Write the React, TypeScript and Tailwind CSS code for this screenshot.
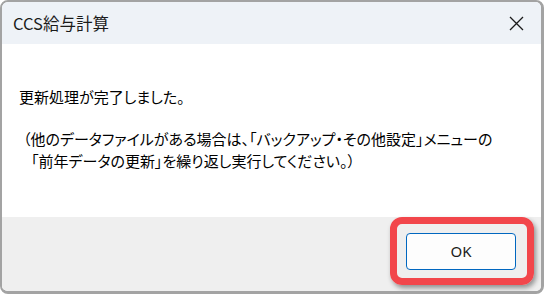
import React from "react";

const jp = "font-['Noto_Sans_CJK_JP','Noto_Sans',sans-serif] [font-feature-settings:'palt']";

export default function App() {
  return (
    <div className="w-[544px] h-[294px] bg-white">
      <div className="w-[544px] h-[294px] flex flex-col overflow-hidden rounded-[8px] border-l-2 border-t-2 border-r-[3px] border-b-[3px] border-[#a3a3a3] bg-white">
        <div className="h-[42px] shrink-0 bg-[#eef2f7] flex items-center justify-between pl-[11px] pr-[17px]">
          <span className={`${jp} text-[16.5px] text-[#1b1b1b]`}>CCS給与計算</span>
          <svg width="15" height="15" viewBox="0 0 15 15" className="text-[#1b1b1b]">
            <path d="M1 1L14 14M14 1L1 14" stroke="currentColor" strokeWidth="1.3" fill="none" />
          </svg>
        </div>
        <div className={`${jp} h-[173px] shrink-0 bg-white pl-[17px] pt-[42px] text-[15px] leading-[22px] text-black`}>
          <div className="whitespace-nowrap">更新処理が完了しました。</div>
          <div className="mt-[20px] whitespace-nowrap">
            <div className="pl-[4px]">（他のデータファイルがある場合は、「バックアップ・その他設定」メニューの</div>
            <div className="pl-[12px]">「前年データの更新」を繰り返し実行してください。）</div>
          </div>
        </div>
        <div className="flex-1 bg-[#efefef] flex justify-end items-start pt-[16px] pr-[25px]">
          <div className="relative">
            <div className="absolute -left-[16px] -top-[16px] w-[144px] h-[68px] rounded-[12px] border-[7px] border-[#f2464b] shadow-[2px_3px_5px_rgba(0,0,0,0.4)]" />
            <button className="relative w-[110px] h-[37px] rounded-[4px] border border-[#0067c0] bg-[#fdfdfd] flex items-center justify-center font-['Noto_Sans',sans-serif] text-[15px] text-[#1b1b1b]">
              OK
            </button>
          </div>
        </div>
      </div>
    </div>
  );
}
